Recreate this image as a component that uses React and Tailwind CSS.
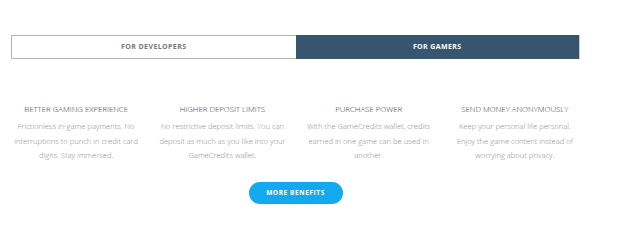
import React from 'react';

const benefits = [
  {
    title: 'BETTER GAMING EXPERIENCE',
    text: 'Frictionless in-game payments. No interruptions to punch in credit card digits. Stay immersed.',
  },
  {
    title: 'HIGHER DEPOSIT LIMITS',
    text: 'No restrictive deposit limits. You can deposit as much as you like into your GameCredits wallet.',
  },
  {
    title: 'PURCHASE POWER',
    text: 'With the GameCredits wallet, credits earned in one game can be used in another.',
  },
  {
    title: 'SEND MONEY ANONYMOUSLY',
    text: 'Keep your personal life personal. Enjoy the game content instead of worrying about privacy.',
  },
];

export default function App() {
  return (
    <div className="w-[640px] h-[251px] bg-white font-['Open_Sans',sans-serif] overflow-hidden">
      <div className="w-[591px]">
        {/* Tabs */}
        <div className="flex h-[24px] mt-[35px] mx-[11px]">
          <button className="flex-1 flex items-center justify-center border border-[#b3b3b3] border-r-0 bg-white text-[7px] font-bold tracking-[0.4px] text-[#777]">
            FOR DEVELOPERS
          </button>
          <button className="flex-1 flex items-center justify-center bg-[#36556e] border-r border-[#c8c8c8] text-[7px] font-bold tracking-[0.4px] text-white">
            FOR GAMERS
          </button>
        </div>

        {/* Benefits */}
        <div className="grid grid-cols-4 mx-[3px] mt-[43px]">
          {benefits.map((b) => (
            <div key={b.title} className="flex flex-col items-center text-center px-[7.5px]">
              <h3 className="text-[7.8px] leading-[14px] text-[#3a3a3a] font-light">{b.title}</h3>
              <p className="mt-[3px] text-[7.6px] leading-[14.5px] text-[#8a8a8a] font-light">{b.text}</p>
            </div>
          ))}
        </div>

        <div className="flex justify-center mt-[19px]">
          <button className="h-[22px] w-[94px] rounded-full bg-[#12a9ee] text-white text-[6.5px] font-bold tracking-[0.6px]">
            MORE BENEFITS
          </button>
        </div>
      </div>
    </div>
  );
}
